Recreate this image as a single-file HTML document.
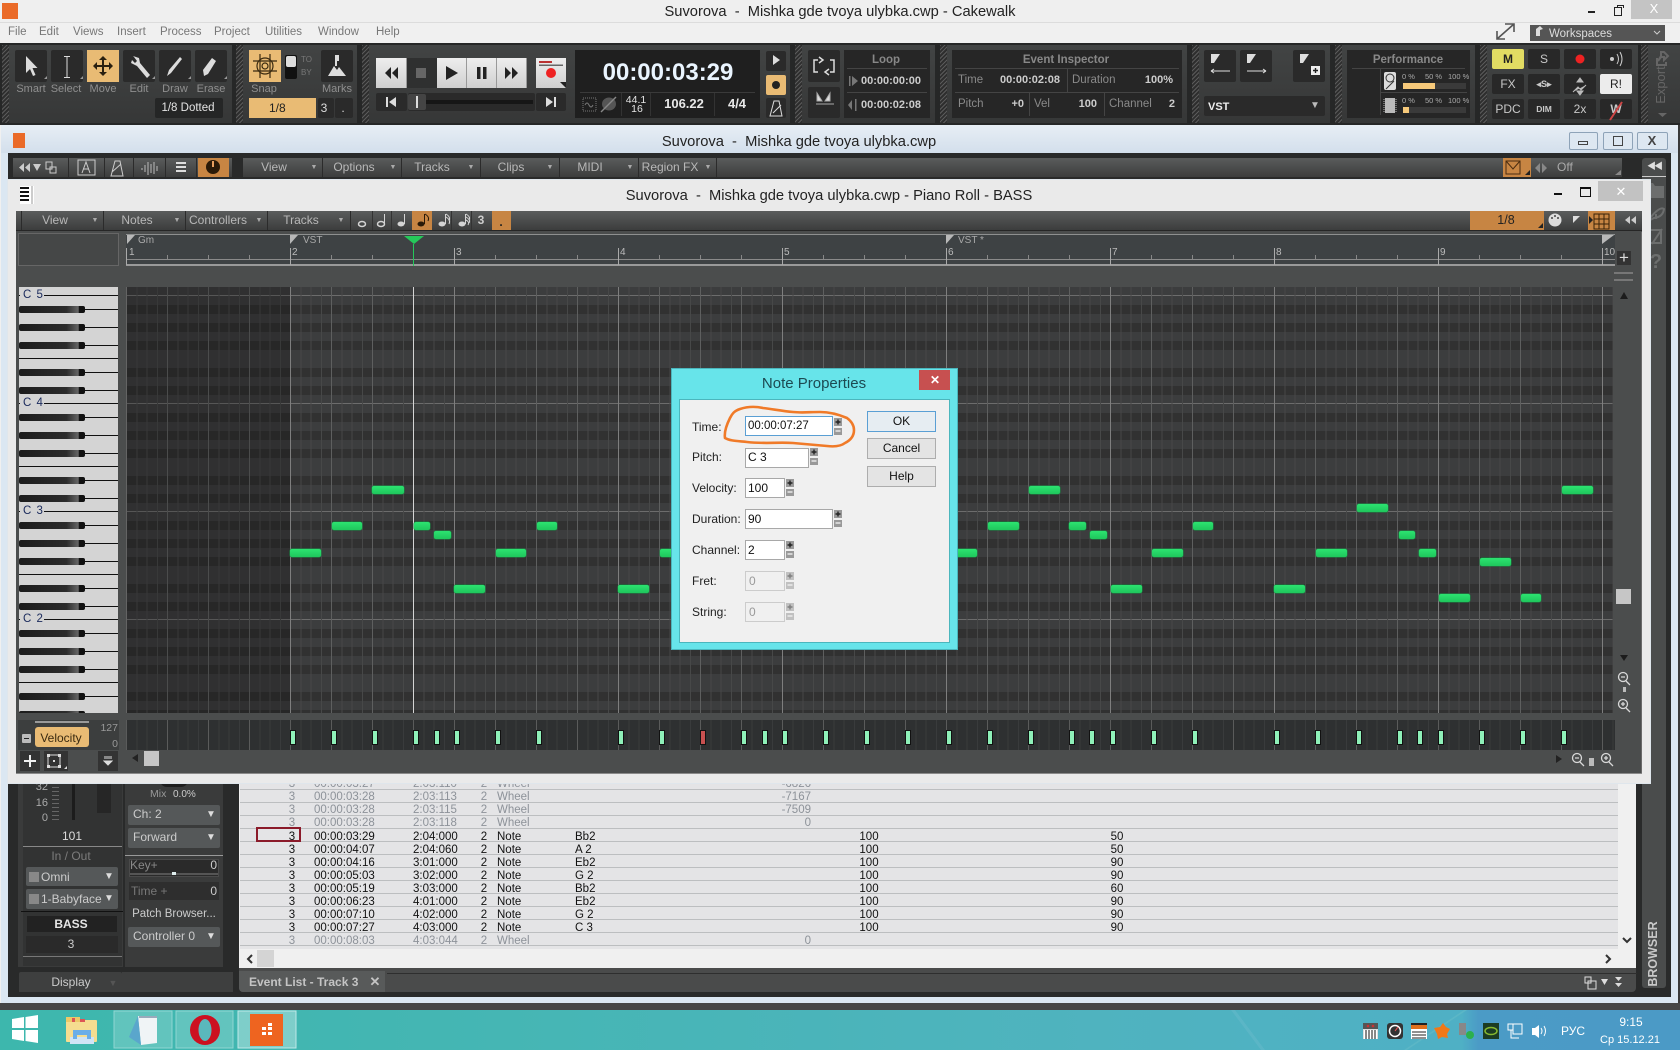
<!DOCTYPE html>
<html><head><meta charset="utf-8"><title>Suvorova - Mishka gde tvoya ulybka.cwp - Cakewalk</title>
<style>
html,body{margin:0;padding:0;background:#f0f0f0}
body{position:relative;width:1680px;height:1050px;overflow:hidden;font-family:"Liberation Sans","Noto Sans CJK SC",sans-serif;font-size:12px}
div,svg,span.t{position:absolute}
.t{position:absolute;line-height:0;white-space:nowrap;margin-top:1px}
.c{transform:translateX(-50%)}
.rt{transform:translateX(-100%)}
.p{background:linear-gradient(#424444,#363737);top:45px;height:78px}
.g{background:repeating-linear-gradient(135deg,#5a5a5a 0 1px,#2e2e2e 1px 3px);top:45px;height:78px;width:7px}
.b{background:#2a2a2a;border-radius:2px}
.bl{color:#8f8f8f;font-size:11px;top:88px}
.lt{background:linear-gradient(#eee,#cfcfcf);border-right:1px solid #999}
.ms{background:#282828;border-radius:2px;color:#c8c8c8;text-align:center;line-height:20px;width:32px;height:20px;font-size:12px}
.tb{background:linear-gradient(#5a5c5c,#3c3d3d)}
.sp{background:#2b2b2b;width:1px}
.n{background:linear-gradient(#2ce370,#1fc65c);height:8px;border-radius:2px;box-shadow:0 0 0 .5px #168b43}
.v{background:#8ef0b8;border:1px solid #111;width:4px;height:13px;top:730px;box-sizing:content-box}
.r{left:0;height:0;width:1380px;color:#111;font-size:11.5px}
.r.f{color:#8d9299}
.r i{position:absolute;font-style:normal;line-height:0;white-space:nowrap;margin-top:1px}
.a{left:292px;transform:translateX(-50%)}.d{left:314px}.e{left:413px}.h{left:484px;transform:translateX(-50%)}.k{left:497px}.m{left:575px}.y{left:811px;transform:translateX(-100%)}.o{left:869px;transform:translateX(-50%)}.u{left:1117px;transform:translateX(-50%)}
.ln{left:240px;width:1378px;height:1px;background:#bcbec0}
.dd{background:#555859;border-radius:2px;color:#c9c9c9;font-size:12px}
.in{background:#fff;border:1px solid #a8a8a8;box-sizing:border-box;height:20px;left:745px}
.in.x{background:#f0f0f0;border-color:#ccc}
.btn{left:867px;width:69px;height:21px;box-sizing:border-box;border:1px solid #adadad;background:#e4e4e4;text-align:center;line-height:19px;font-size:12px;color:#111}
.lab{color:#222;font-size:12px;left:692px}
.men{color:#777;font-size:11.5px;top:31px}
.ck{left:20px;width:24px;height:12px;background:#d4d4d4;color:#1a2a5c;font-size:11.5px;letter-spacing:1px;line-height:12px;text-indent:3px;white-space:nowrap}
</style></head><body>

<!-- main title -->
<div style="left:0;top:0;width:1680px;height:22px;background:#efefef;border-bottom:1px solid #dcdcdc"></div>
<div style="left:2px;top:3px;width:16px;height:16px;background:#ea6a28"></div>
<span class="t c" style="left:840px;top:11px;font-size:14.7px;color:#222">Suvorova &nbsp;-&nbsp; Mishka gde tvoya ulybka.cwp - Cakewalk</span>
<div style="left:1588px;top:11px;width:7px;height:2px;background:#222"></div>
<div style="left:1614px;top:7px;width:6px;height:7px;border:1px solid #222"></div>
<div style="left:1617px;top:5px;width:5px;height:2px;border:1px solid #222;border-bottom:0"></div>
<div style="left:1631px;top:0;width:41px;height:19px;background:#c4c4c4"></div>
<span class="t c" style="left:1654px;top:8px;font-size:13px;color:#fff">X</span>

<!-- menu -->
<div style="left:0;top:23px;width:1680px;height:20px;background:#f0f0f0"></div>
<span class="t men" style="left:8px">File</span>
<span class="t men" style="left:39px">Edit</span>
<span class="t men" style="left:73px">Views</span>
<span class="t men" style="left:117px">Insert</span>
<span class="t men" style="left:160px">Process</span>
<span class="t men" style="left:214px">Project</span>
<span class="t men" style="left:265px">Utilities</span>
<span class="t men" style="left:318px">Window</span>
<span class="t men" style="left:376px">Help</span>
<div style="left:1530px;top:25px;width:135px;height:16px;background:#555"></div>
<span class="t" style="left:1549px;top:33px;color:#ddd;font-size:11.5px">Workspaces</span>
<svg style="left:0;top:0" width="1680" height="130">
<path d="M1497 39l17-15M1505 24h9v8M1497 31v8h8" stroke="#555" stroke-width="1.6" fill="none"/>
<path d="M1536 36l0-7 4-3 3 3-3 1v6z" fill="#ddd"/><path d="M1654 31l3 3 3-3" stroke="#ccc" fill="none"/>
</svg>

<!-- top toolbar -->
<div style="left:0;top:43px;width:1680px;height:82px;background:#262727"></div>
<div class="g" style="left:2px"></div><div class="p" style="left:9px;width:223px"></div>
<div class="g" style="left:236px"></div><div class="p" style="left:243px;width:114px"></div>
<div class="g" style="left:362px"></div><div class="p" style="left:369px;width:421px"></div>
<div class="g" style="left:795px"></div><div class="p" style="left:802px;width:133px"></div>
<div class="g" style="left:940px"></div><div class="p" style="left:947px;width:240px"></div>
<div class="g" style="left:1192px"></div><div class="p" style="left:1199px;width:131px"></div>
<div class="g" style="left:1335px"></div><div class="p" style="left:1342px;width:133px"></div>
<div class="g" style="left:1480px"></div><div class="p" style="left:1487px;width:151px"></div>
<div class="g" style="left:1641px"></div><div class="p" style="left:1648px;width:32px"></div>

<div class="b" style="left:15px;top:50px;width:32px;height:32px"></div>
<div class="b" style="left:51px;top:50px;width:32px;height:32px"></div>
<div style="left:87px;top:50px;width:32px;height:32px;background:#e9bb74"></div>
<div class="b" style="left:123px;top:50px;width:32px;height:32px"></div>
<div class="b" style="left:159px;top:50px;width:32px;height:32px"></div>
<div class="b" style="left:195px;top:50px;width:32px;height:32px"></div>
<span class="t c bl" style="left:31px">Smart</span>
<span class="t c bl" style="left:66px">Select</span>
<span class="t c bl" style="left:103px">Move</span>
<span class="t c bl" style="left:139px">Edit</span>
<span class="t c bl" style="left:175px">Draw</span>
<span class="t c bl" style="left:211px">Erase</span>
<div class="b" style="left:155px;top:98px;width:68px;height:20px;background:#252626"></div>
<span class="t c" style="left:188px;top:107px;color:#e4e4e4;font-size:11.5px">1/8 Dotted</span>

<div style="left:249px;top:50px;width:32px;height:32px;background:#e9bb74"></div>
<div class="b" style="left:285px;top:55px;width:12px;height:24px;background:#111"></div>
<div style="left:286px;top:56px;width:10px;height:11px;background:#ddd;border-radius:2px"></div>
<span class="t" style="left:301px;top:59px;color:#777;font-size:8px">TO</span>
<span class="t" style="left:301px;top:72px;color:#777;font-size:8px">BY</span>
<div class="b" style="left:321px;top:50px;width:32px;height:32px"></div>
<span class="t c bl" style="left:264px">Snap</span>
<span class="t c bl" style="left:337px">Marks</span>
<div style="left:249px;top:98px;width:67px;height:20px;background:#e9bb74"></div>
<span class="t" style="left:269px;top:107px;color:#222;font-size:12px">1/8</span>
<div class="b" style="left:318px;top:98px;width:16px;height:20px"></div>
<span class="t c" style="left:324px;top:107px;color:#ddd">3</span>
<div class="b" style="left:335px;top:98px;width:18px;height:20px"></div>
<span class="t c" style="left:343px;top:107px;color:#ddd">.</span>

<!-- transport -->
<div class="lt" style="left:376px;top:58px;width:30px;height:30px"></div>
<div style="left:407px;top:58px;width:30px;height:30px;background:#2f3030"></div>
<div class="lt" style="left:437px;top:58px;width:29px;height:30px"></div>
<div class="lt" style="left:467px;top:58px;width:29px;height:30px"></div>
<div class="lt" style="left:497px;top:58px;width:29px;height:30px"></div>
<div class="lt" style="left:536px;top:58px;width:30px;height:30px;border:0"></div>
<div class="b" style="left:376px;top:93px;width:31px;height:18px"></div>
<div class="b" style="left:408px;top:93px;width:127px;height:18px"></div>
<div style="left:425px;top:100px;width:108px;height:4px;background:#161616"></div>
<div style="left:408px;top:94px;width:18px;height:16px;background:#444;border-radius:2px"></div>
<div style="left:416px;top:96px;width:2px;height:12px;background:#ddd"></div>
<div class="b" style="left:536px;top:93px;width:30px;height:18px"></div>
<div style="left:575px;top:50px;width:185px;height:68px;background:#1f1f1f"></div>
<div style="left:580px;top:92px;width:175px;height:1px;background:#3a3a3a"></div>
<span class="t c" style="left:668px;top:72px;font-size:24px;font-weight:bold;color:#eaf5ff">00:00:03:29</span>
<span class="t c" style="left:636px;top:99px;font-size:10.5px;color:#e4e4e4">44.1</span>
<span class="t c" style="left:637px;top:108px;font-size:10.5px;color:#e4e4e4">16</span>
<span class="t c" style="left:684px;top:103px;font-size:13px;font-weight:bold;color:#e8e8e8">106.22</span>
<span class="t c" style="left:737px;top:103px;font-size:13px;font-weight:bold;color:#e8e8e8">4/4</span>
<div style="left:621px;top:93px;width:1px;height:23px;background:#333"></div>
<div style="left:650px;top:93px;width:1px;height:23px;background:#333"></div>
<div style="left:714px;top:93px;width:1px;height:23px;background:#333"></div>
<div class="b" style="left:766px;top:51px;width:20px;height:20px"></div>
<div style="left:766px;top:75px;width:20px;height:20px;background:#e9bb74;border-radius:2px"></div>
<div class="b" style="left:766px;top:98px;width:20px;height:20px"></div>

<!-- loop -->
<div class="b" style="left:808px;top:50px;width:32px;height:32px"></div>
<div class="b" style="left:808px;top:87px;width:32px;height:31px"></div>
<div style="left:844px;top:50px;width:86px;height:68px;background:#262626"></div>
<span class="t c" style="left:886px;top:59px;color:#888;font-weight:bold;font-size:11.5px">Loop</span>
<div style="left:847px;top:68px;width:80px;height:1px;background:#444"></div>
<div style="left:847px;top:92px;width:80px;height:1px;background:#444"></div>
<span class="t" style="left:861px;top:80px;color:#ccc;font-size:11px;font-weight:bold">00:00:00:00</span>
<span class="t" style="left:861px;top:104px;color:#ccc;font-size:11px;font-weight:bold">00:00:02:08</span>

<!-- event inspector -->
<div style="left:952px;top:50px;width:230px;height:68px;background:#262626"></div>
<span class="t c" style="left:1066px;top:59px;color:#888;font-weight:bold;font-size:11.5px">Event Inspector</span>
<div style="left:955px;top:68px;width:224px;height:1px;background:#444"></div>
<div style="left:955px;top:92px;width:224px;height:1px;background:#444"></div>
<div style="left:1067px;top:69px;width:1px;height:23px;background:#444"></div>
<div style="left:1029px;top:93px;width:1px;height:23px;background:#444"></div>
<div style="left:1104px;top:93px;width:1px;height:23px;background:#444"></div>
<span class="t" style="left:958px;top:79px;color:#8a8a8a;font-size:11.5px">Time</span>
<span class="t" style="left:1000px;top:79px;color:#ccc;font-size:11px;font-weight:bold">00:00:02:08</span>
<span class="t" style="left:1072px;top:79px;color:#8a8a8a;font-size:11.5px">Duration</span>
<span class="t rt" style="left:1173px;top:79px;color:#ccc;font-size:11px;font-weight:bold">100%</span>
<span class="t" style="left:958px;top:103px;color:#8a8a8a;font-size:11.5px">Pitch</span>
<span class="t rt" style="left:1024px;top:103px;color:#ccc;font-size:11px;font-weight:bold">+0</span>
<span class="t" style="left:1034px;top:103px;color:#8a8a8a;font-size:11.5px">Vel</span>
<span class="t rt" style="left:1097px;top:103px;color:#ccc;font-size:11px;font-weight:bold">100</span>
<span class="t" style="left:1109px;top:103px;color:#8a8a8a;font-size:11.5px">Channel</span>
<span class="t rt" style="left:1175px;top:103px;color:#ccc;font-size:11px;font-weight:bold">2</span>

<div class="b" style="left:1204px;top:50px;width:32px;height:32px"></div>
<div class="b" style="left:1240px;top:50px;width:32px;height:32px"></div>
<div class="b" style="left:1293px;top:50px;width:32px;height:32px"></div>
<div class="b" style="left:1204px;top:96px;width:121px;height:20px"></div>
<span class="t" style="left:1208px;top:106px;color:#eee;font-weight:bold;font-size:11px">VST</span>
<span class="t c" style="left:1315px;top:105px;color:#bbb;font-size:10px">▼</span>

<!-- performance -->
<div style="left:1347px;top:50px;width:123px;height:68px;background:#262626"></div>
<span class="t c" style="left:1408px;top:59px;color:#888;font-weight:bold;font-size:11.5px">Performance</span>
<div style="left:1352px;top:68px;width:113px;height:1px;background:#444"></div>
<div style="left:1380px;top:92px;width:87px;height:1px;background:#444"></div>
<div style="left:1380px;top:69px;width:1px;height:46px;background:#444"></div>
<div style="left:1403px;top:83px;width:63px;height:6px;background:#3a3a3a"></div>
<div style="left:1403px;top:83px;width:32px;height:6px;background:#f6c97a"></div>
<div style="left:1403px;top:107px;width:63px;height:6px;background:#3a3a3a"></div>
<div style="left:1403px;top:107px;width:6px;height:6px;background:#f6c97a"></div>
<span class="t" style="left:1402px;top:76px;color:#aaa;font-size:7.5px">0 %</span>
<span class="t" style="left:1425px;top:76px;color:#aaa;font-size:7.5px">50 %</span>
<span class="t" style="left:1448px;top:76px;color:#aaa;font-size:7.5px">100 %</span>
<span class="t" style="left:1402px;top:100px;color:#aaa;font-size:7.5px">0 %</span>
<span class="t" style="left:1425px;top:100px;color:#aaa;font-size:7.5px">50 %</span>
<span class="t" style="left:1448px;top:100px;color:#aaa;font-size:7.5px">100 %</span>

<!-- M S R -->
<div class="ms" style="left:1492px;top:49px;background:#e2dc63;color:#222;font-weight:bold">M</div>
<div class="ms" style="left:1528px;top:49px">S</div>
<div class="ms" style="left:1564px;top:49px"></div>
<div class="ms" style="left:1600px;top:49px"></div>
<div class="ms" style="left:1492px;top:74px">FX</div>
<div class="ms" style="left:1528px;top:74px;font-size:9px;font-weight:bold">&#9666;S&#9656;</div>
<div class="ms" style="left:1564px;top:74px"></div>
<div class="ms" style="left:1600px;top:74px;background:#ececec;color:#222">R!</div>
<div class="ms" style="left:1492px;top:99px">PDC</div>
<div class="ms" style="left:1528px;top:99px;font-size:8.5px;font-weight:bold">DIM</div>
<div class="ms" style="left:1564px;top:99px">2x</div>
<div class="ms" style="left:1600px;top:99px;font-weight:bold">W</div>
<span class="t" style="left:1661px;top:85px;margin:0;color:#666;font-size:13px;transform:translateX(-50%) rotate(-90deg)">Export</span>

<svg style="left:0;top:40px" width="1680" height="90" viewBox="0 40 1680 90">
<g fill="#dcdcdc">
<path d="M26 56v17l4-4 3 7 2.500-1-3-7h5z"/>
<path d="M64 56h6v1h-2.500v20h2.500v1h-6v-1h2.500v-20h-2.500z"/>
<path d="M44 79h3v-3zM80 79h3v-3zM152 79h3v-3zM188 79h3v-3zM224 79h3v-3z" fill="#999"/>
<path d="M133 56l6 2 1 5 10 12-3 3-10-12-6-3 1-3 3 3 2-2-3-4z"/>
<path d="M167 76l2-6 11-13 2 2-11 14z"/>
<path d="M204 76l-1-6 9-12 4 3-8 13z"/>
</g>
<path fill="#2a2010" d="M103 56l4 4h-3v5h5v-3l4 4-4 4v-3h-5v5h3l-4 4-4-4h3v-5h-5v3l-4-4 4-4v3h5v-5h-3z"/>
<g fill="none" stroke="#3a2a10" stroke-width="1.200"><circle cx="265" cy="66" r="8"/><path d="M253 61h24M253 71h24M260 54v24M270 54v24"/><circle cx="265" cy="66" r="3"/></g>
<path d="M328 76l6-10 3 4 2-3 7 9h-8z" fill="#ddd"/><path d="M335 55h4v6h-2v5h-2z" fill="#ddd"/>
<g fill="#222"><path d="M385 73l6-6v12zM392 73l6-6v12z"/><path d="M446 66v14l12-7z"/><path d="M477 67h3.500v12h-3.500zM483 67h3.500v12h-3.500z"/><path d="M505 67l6 6-6 6zM512 67l6 6-6 6z"/></g>
<rect x="416" y="68" width="10" height="10" fill="#666"/>
<rect x="539" y="61" width="13" height="2" fill="#b33"/><rect x="539" y="64.500" width="24" height="1.500" fill="#666"/><circle cx="551" cy="73" r="5" fill="#e22"/><path d="M566 88v-6h-6z" fill="#222"/>
<g fill="#ddd"><path d="M386 97v10h2v-10zM396 97v10l-7-5z"/><path d="M546 97v10l7-5zM554 97h2v10h-2z"/><path d="M773 55v10l7-5z"/></g>
<rect x="583" y="98" width="13" height="13" fill="none" stroke="#777" stroke-dasharray="1 1"/><path d="M585 105q2-4 4 0t4 0" stroke="#777" fill="none"/>
<ellipse cx="609" cy="104" rx="7" ry="6.500" fill="#555"/><path d="M601 112l15-15" stroke="#888" stroke-width="1.400"/>
<circle cx="776" cy="85" r="4" fill="#222"/>
<path d="M770 116l4-15h5l3 15zM773 113l8-8" stroke="#ddd" fill="none"/>
<g fill="none" stroke="#ddd" stroke-width="1.500"><path d="M818 60h-4v12h4M830 60h4v12h-4"/><path d="M819 57l4 3-4 3M829 69l-4 3 4 3"/></g>
<path d="M817 93l5 8h-5zM830 93l-5 8h5zM816 104h18" fill="#ddd" stroke="#aaa"/>
<path d="M849 76v10h1.500v-10zM852 76l6 5-6 5zM852 100l-4 5 4 5zM855 99v12h1.500v-12z" fill="#777"/>
<g fill="#ddd"><path d="M1211 54h9l-6 9h-3zM1247 54h9l-6 9h-3zM1300 54h9l-6 9h-3z"/><rect x="1311" y="66" width="9" height="9" fill="#eee"/></g>
<path d="M1211 71h19M1247 71h19M1211 71l3-2M1211 71l3 2M1266 71l-3-2M1266 71l-3 2" stroke="#ddd"/>
<path d="M1313 70.500h5M1315.500 68v5" stroke="#222" stroke-width="1.400"/>
<rect x="1384" y="72" width="12" height="18" rx="2" fill="#ddd"/><circle cx="1390" cy="78" r="4" fill="none" stroke="#333"/><path d="M1386 89l8-8" stroke="#333"/>
<rect x="1385" y="98" width="10" height="15" fill="#bbb"/><path d="M1384 99v14M1396 99v14" stroke="#bbb" stroke-dasharray="1 1"/>
<circle cx="1580" cy="59" r="4.500" fill="#e22"/>
<circle cx="1612" cy="59" r="2" fill="#ccc"/><path d="M1617 54q3 5 0 10M1620 52q4 7 0 14" stroke="#ccc" fill="none"/>
<path d="M1573 92l5-5 3 3 5-5M1580 78l3 4h-6zM1580 95l3-4h-6z" stroke="#bbb" fill="#bbb"/>
<path d="M1610 120l12-18" stroke="#c44" stroke-width="2"/>
<path d="M1661 56v-4h3l4 4-4 4v-3h-3l-3 4zM1657 58v7h9v-3" fill="none" stroke="#666" stroke-width="2"/>
<path d="M1658 113h9l-4.500 4z" fill="#666"/>
</svg>

<!-- MDI window -->
<div style="left:1px;top:125px;width:1677px;height:878px;background:#dbe7f2"></div>
<div style="left:1px;top:125px;width:1677px;height:28px;background:linear-gradient(#e7eef5,#d3dfec)"></div>
<div style="left:13px;top:133px;width:12px;height:15px;background:#ea6a28"></div>
<span class="t c" style="left:799px;top:141px;font-size:14.7px;color:#222">Suvorova &nbsp;-&nbsp; Mishka gde tvoya ulybka.cwp</span>
<div style="left:1569px;top:132px;width:29px;height:18px;border:1px solid #8ea3b8;border-radius:2px;background:#dde7f1;box-sizing:border-box"></div>
<div style="left:1603px;top:132px;width:30px;height:18px;border:1px solid #8ea3b8;border-radius:2px;background:#dde7f1;box-sizing:border-box"></div>
<div style="left:1637px;top:132px;width:31px;height:18px;border:1px solid #8ea3b8;border-radius:2px;background:#dde7f1;box-sizing:border-box"></div>
<div style="left:1578px;top:141px;width:10px;height:4px;border:1px solid #444;box-sizing:border-box"></div>
<div style="left:1613px;top:136px;width:10px;height:10px;border:1px solid #444;box-sizing:border-box"></div>
<span class="t c" style="left:1652px;top:140px;font-weight:bold;font-size:13px;color:#444">X</span>

<div style="left:8px;top:153px;width:1663px;height:844px;background:#292a2a"></div>
<!-- mdi toolbar -->
<div class="tb" style="left:13px;top:158px;width:219px;height:19px"></div>
<div class="tb" style="left:243px;top:158px;width:1379px;height:19px"></div>
<div style="left:198px;top:158px;width:31px;height:19px;background:#c78543"></div>
<div class="sp" style="left:68px;top:158px;height:19px"></div><div class="sp" style="left:104px;top:158px;height:19px"></div><div class="sp" style="left:133px;top:158px;height:19px"></div><div class="sp" style="left:165px;top:158px;height:19px"></div><div class="sp" style="left:196px;top:158px;height:19px"></div>
<svg style="left:0;top:150px" width="1680" height="40" viewBox="0 150 1680 40">
<g fill="#ccc"><path d="M24 163v9l-5-4.500zM30 163v9l-5-4.500zM33 164h8l-4 7z"/></g>
<path d="M46 162h6v7h-6zM50 167h6v6h-6z" stroke="#ccc" fill="none"/>
<rect x="78" y="160" width="17" height="15" fill="none" stroke="#ccc"/><path d="M82 173l4-11 4 11M83 169h6" stroke="#ccc" fill="none"/>
<path d="M111 176l4-15h5l3 15zM112 172l9-8" stroke="#ccc" fill="none"/>
<path d="M142 168v2M145 165v7M148 162v13M151 164v9M154 162v12M157 166v5" stroke="#bbb"/>
<path d="M176 163h10M176 167h10M176 171h10" stroke="#ddd" stroke-width="2"/>
<circle cx="213" cy="167" r="7" fill="#2a1a08"/><rect x="212" y="161" width="2" height="6" fill="#e8a060"/>
</svg>
<span class="t c" style="left:274px;top:166px;color:#b8b8b8">View</span>
<span class="t c" style="left:354px;top:166px;color:#b8b8b8">Options</span>
<span class="t c" style="left:432px;top:166px;color:#b8b8b8">Tracks</span>
<span class="t c" style="left:511px;top:166px;color:#b8b8b8">Clips</span>
<span class="t c" style="left:590px;top:166px;color:#b8b8b8">MIDI</span>
<span class="t c" style="left:670px;top:166px;color:#b8b8b8">Region FX</span>
<div class="sp" style="left:322px;top:158px;height:19px"></div><div class="sp" style="left:401px;top:158px;height:19px"></div><div class="sp" style="left:480px;top:158px;height:19px"></div><div class="sp" style="left:559px;top:158px;height:19px"></div><div class="sp" style="left:638px;top:158px;height:19px"></div><div class="sp" style="left:716px;top:158px;height:19px"></div>
<span class="t c" style="left:314px;top:167px;color:#aaa;font-size:7px">▼</span><span class="t c" style="left:393px;top:167px;color:#aaa;font-size:7px">▼</span><span class="t c" style="left:471px;top:167px;color:#aaa;font-size:7px">▼</span><span class="t c" style="left:550px;top:167px;color:#aaa;font-size:7px">▼</span><span class="t c" style="left:630px;top:167px;color:#aaa;font-size:7px">▼</span><span class="t c" style="left:708px;top:167px;color:#aaa;font-size:7px">▼</span>
<div style="left:1503px;top:158px;width:28px;height:19px;background:#c78543"></div>
<svg style="left:1503px;top:158px" width="28" height="19"><path d="M3 3h14v13h-14zM3 3l7 8 7-8" stroke="#4a2c10" fill="none"/><path d="M22 17h5v-5z" fill="#222"/></svg>
<span class="t" style="left:1557px;top:166px;color:#aaa;font-size:12px">Off</span>
<svg style="left:1534px;top:160px" width="88" height="16"><path d="M6 3v10l-5-5zM8 3v10l5-5z" fill="#888"/><path d="M81 15h6v-5z" fill="#888"/></svg>
<div style="left:1642px;top:158px;width:24px;height:830px;background:#4a4c4c;border-radius:3px"></div>
<span class="t c" style="left:1654px;top:165px;color:#ddd;font-size:9px;letter-spacing:-2px">◀◀</span>
<div style="left:1642px;top:176px;width:24px;height:1px;background:#ccc"></div>
<svg style="left:1644px;top:180px" width="22" height="70"><path d="M2 3h7l2 3h9v12h-18z" fill="#6c6e6e"/><path d="M6 38q10-12 14-9-1 8-10 9l-4 2zM12 34v5" stroke="#6c6e6e" fill="none" stroke-width="2"/><path d="M5 50h12v13h-12zM8 64l10-15" stroke="#6c6e6e" fill="none" stroke-width="2"/></svg>
<span class="t c" style="left:1656px;top:261px;color:#6c6e6e;font-size:20px;font-weight:bold">?</span>
<span class="t" style="left:1653px;top:954px;margin:0;color:#c8c8c8;font-size:12.5px;font-weight:bold;transform:translate(-50%,0) rotate(-90deg)">BROWSER</span>

<!-- inspector -->
<div style="left:18px;top:783px;width:105px;height:184px;background:#3a3b3b"></div>
<div style="left:125px;top:783px;width:98px;height:184px;background:#3a3b3b"></div>
<div style="left:23px;top:783px;width:99px;height:183px;background:#323333"></div>
<span class="t rt" style="left:48px;top:786px;color:#aaa;font-size:11px">32</span>
<span class="t rt" style="left:48px;top:802px;color:#aaa;font-size:11px">16</span>
<span class="t rt" style="left:48px;top:817px;color:#aaa;font-size:11px">0</span>
<div style="left:52px;top:783px;width:7px;height:37px;background:repeating-linear-gradient(#666 0 1px,transparent 1px 4px)"></div>
<div style="left:72px;top:783px;width:3px;height:37px;background:#1c1c1c"></div>
<div style="left:97px;top:783px;width:14px;height:30px;background:#262626"></div>
<div style="left:160px;top:780px;width:28px;height:7px;border-radius:0 0 14px 14px;background:#1e1e1e"></div>
<span class="t c" style="left:72px;top:835px;color:#ddd;font-size:12px">101</span>
<div style="left:23px;top:846px;width:99px;height:1px;background:#888"></div>
<span class="t c" style="left:71px;top:855px;color:#7c7c7c;font-size:12px">In / Out</span>
<div class="dd" style="left:26px;top:867px;width:92px;height:19px"></div>
<div class="dd" style="left:26px;top:889px;width:92px;height:20px"></div>
<div style="left:29px;top:872px;width:10px;height:10px;background:#888"></div>
<div style="left:29px;top:894px;width:10px;height:10px;background:#888"></div>
<span class="t" style="left:41px;top:876px;color:#ccc;font-size:12px">Omni</span>
<span class="t" style="left:41px;top:898px;color:#ccc;font-size:12px">1-Babyface</span>
<span class="t c" style="left:109px;top:876px;color:#ddd;font-size:10px">▼</span>
<span class="t c" style="left:109px;top:898px;color:#ddd;font-size:10px">▼</span>
<div style="left:21px;top:911px;width:102px;height:1px;background:#111"></div>
<div style="left:27px;top:916px;width:90px;height:16px;background:#222"></div>
<span class="t c" style="left:71px;top:923px;color:#e6e6e6;font-weight:bold;font-size:12px">BASS</span>
<div style="left:26px;top:936px;width:92px;height:17px;background:#2a2a2a"></div>
<span class="t c" style="left:71px;top:943px;color:#ccc;font-size:12px">3</span>
<div style="left:23px;top:956px;width:99px;height:1px;background:#777"></div>
<span class="t" style="left:150px;top:793px;color:#999;font-size:10.5px">Mix</span>
<span class="t" style="left:173px;top:794px;color:#ccc;font-size:10px">0.0%</span>
<div class="dd" style="left:128px;top:805px;width:92px;height:20px"></div>
<div class="dd" style="left:128px;top:828px;width:92px;height:20px"></div>
<span class="t" style="left:133px;top:813px;color:#ccc">Ch: 2</span>
<span class="t" style="left:133px;top:836px;color:#ccc">Forward</span>
<span class="t c" style="left:211px;top:814px;color:#ddd;font-size:10px">▼</span>
<span class="t c" style="left:211px;top:837px;color:#ddd;font-size:10px">▼</span>
<div style="left:125px;top:855px;width:98px;height:1px;background:#999"></div>
<div style="left:129px;top:859px;width:90px;height:18px;background:#2a2a2a;border:1px solid #4a4a4a;box-sizing:border-box"></div>
<div style="left:130px;top:873px;width:88px;height:2px;background:#555"></div>
<div style="left:172px;top:872px;width:4px;height:3px;background:#dfeeee"></div>
<span class="t" style="left:130px;top:864px;color:#888">Key+</span>
<span class="t rt" style="left:217px;top:864px;color:#ccc">0</span>
<div style="left:129px;top:882px;width:90px;height:18px;background:#2e2e2e"></div>
<span class="t" style="left:131px;top:890px;color:#777">Time +</span>
<span class="t rt" style="left:217px;top:890px;color:#ccc">0</span>
<span class="t c" style="left:174px;top:913px;color:#ccc;font-size:11.5px">Patch Browser...</span>
<div class="dd" style="left:128px;top:927px;width:92px;height:20px"></div>
<span class="t" style="left:133px;top:935px;color:#ccc">Controller 0</span>
<span class="t c" style="left:211px;top:936px;color:#ddd;font-size:10px">▼</span>
<div style="left:19px;top:972px;width:103px;height:20px;background:#3e3f3f;border-radius:2px 2px 0 0"></div>
<span class="t c" style="left:71px;top:981px;color:#ccc;font-size:12px">Display</span>
<span class="t c" style="left:113px;top:982px;color:#555;font-size:9px">▼</span>
<div style="left:122px;top:972px;width:111px;height:20px;background:#3e3f3f"></div>

<!-- event list -->
<div style="left:239px;top:783px;width:1397px;height:185px;background:#f0f0f0"></div>
<div style="left:240px;top:783px;width:1378px;height:166px;background:#e4e4e6"></div>
<div class="ln" style="top:789px"></div><div class="ln" style="top:802px"></div><div class="ln" style="top:815px"></div><div class="ln" style="top:828px"></div><div class="ln" style="top:841px"></div><div class="ln" style="top:854px"></div><div class="ln" style="top:867px"></div><div class="ln" style="top:880px"></div><div class="ln" style="top:893px"></div><div class="ln" style="top:906px"></div><div class="ln" style="top:919px"></div><div class="ln" style="top:932px"></div><div class="ln" style="top:945px"></div>
<div class="r f" style="top:783px"><i class="a">3</i><i class="d">00:00:03:27</i><i class="e">2:03:110</i><i class="h">2</i><i class="k">Wheel</i><i class="y">-6826</i></div>
<div class="r f" style="top:796px"><i class="a">3</i><i class="d">00:00:03:28</i><i class="e">2:03:113</i><i class="h">2</i><i class="k">Wheel</i><i class="y">-7167</i></div>
<div class="r f" style="top:809px"><i class="a">3</i><i class="d">00:00:03:28</i><i class="e">2:03:115</i><i class="h">2</i><i class="k">Wheel</i><i class="y">-7509</i></div>
<div class="r f" style="top:822px"><i class="a">3</i><i class="d">00:00:03:28</i><i class="e">2:03:118</i><i class="h">2</i><i class="k">Wheel</i><i class="y">0</i></div>
<div class="r" style="top:836px"><i class="a">3</i><i class="d">00:00:03:29</i><i class="e">2:04:000</i><i class="h">2</i><i class="k">Note</i><i class="m">Bb2</i><i class="o">100</i><i class="u">50</i></div>
<div class="r" style="top:849px"><i class="a">3</i><i class="d">00:00:04:07</i><i class="e">2:04:060</i><i class="h">2</i><i class="k">Note</i><i class="m">A 2</i><i class="o">100</i><i class="u">50</i></div>
<div class="r" style="top:862px"><i class="a">3</i><i class="d">00:00:04:16</i><i class="e">3:01:000</i><i class="h">2</i><i class="k">Note</i><i class="m">Eb2</i><i class="o">100</i><i class="u">90</i></div>
<div class="r" style="top:875px"><i class="a">3</i><i class="d">00:00:05:03</i><i class="e">3:02:000</i><i class="h">2</i><i class="k">Note</i><i class="m">G 2</i><i class="o">100</i><i class="u">90</i></div>
<div class="r" style="top:888px"><i class="a">3</i><i class="d">00:00:05:19</i><i class="e">3:03:000</i><i class="h">2</i><i class="k">Note</i><i class="m">Bb2</i><i class="o">100</i><i class="u">60</i></div>
<div class="r" style="top:901px"><i class="a">3</i><i class="d">00:00:06:23</i><i class="e">4:01:000</i><i class="h">2</i><i class="k">Note</i><i class="m">Eb2</i><i class="o">100</i><i class="u">90</i></div>
<div class="r" style="top:914px"><i class="a">3</i><i class="d">00:00:07:10</i><i class="e">4:02:000</i><i class="h">2</i><i class="k">Note</i><i class="m">G 2</i><i class="o">100</i><i class="u">90</i></div>
<div class="r" style="top:927px"><i class="a">3</i><i class="d">00:00:07:27</i><i class="e">4:03:000</i><i class="h">2</i><i class="k">Note</i><i class="m">C 3</i><i class="o">100</i><i class="u">90</i></div>
<div class="r f" style="top:940px"><i class="a">3</i><i class="d">00:00:08:03</i><i class="e">4:03:044</i><i class="h">2</i><i class="k">Wheel</i><i class="y">0</i></div>
<div style="left:256px;top:827px;width:45px;height:15px;border:1px solid #8b1a2a;box-shadow:inset 0 0 0 1px #8b1a2a;box-sizing:border-box"></div>
<div style="left:257px;top:950px;width:17px;height:17px;background:#d4d4d4"></div>
<svg style="left:240px;top:950px" width="1396" height="18"><path d="M12 5l-4 4 4 4M1366 5l4 4-4 4" stroke="#333" stroke-width="2" fill="none"/></svg>
<svg style="left:1618px;top:932px" width="18" height="16"><path d="M5 6l4 4 4-4" stroke="#333" stroke-width="2" fill="none"/></svg>

<!-- bottom tab -->
<div style="left:239px;top:968px;width:1397px;height:24px;background:#4a4b4b;border-radius:0 0 4px 4px"></div>
<div style="left:239px;top:971px;width:146px;height:21px;background:#585a5a;border-radius:0 0 0 4px"></div>
<div style="left:387px;top:973px;width:1250px;height:1px;background:#2e2e2e"></div>
<span class="t" style="left:249px;top:981px;color:#c4c4c4;font-weight:bold;font-size:12px">Event List - Track 3</span>
<span class="t c" style="left:375px;top:981px;color:#c4c4c4;font-weight:bold;font-size:13px">✕</span>
<svg style="left:1580px;top:972px" width="50" height="20"><path d="M5 5h6v6h-6zM8 9h8v8h-8z" stroke="#ddd" fill="none"/><path d="M21 7h7l-3.500 6zM35 5h7l-3.500 4zM35 11h7l-3.500 4z" fill="#ddd"/></svg>

<!-- piano roll window -->
<div style="left:8px;top:180px;width:1642px;height:603px;background:#eaeaea;box-shadow:0 0 0 1px #dfe6ec"></div>
<span class="t c" style="left:829px;top:195px;font-size:14.7px;color:#222">Suvorova &nbsp;-&nbsp; Mishka gde tvoya ulybka.cwp - Piano Roll - BASS</span>
<svg style="left:20px;top:186px" width="14" height="18"><rect x="0" y="0" width="14" height="18" fill="#fff"/><path d="M0 1h9v2h-9zM0 5h9v2h-9zM0 9h9v2h-9zM0 13h9v2h-9z" fill="#111"/><path d="M12 0v18" stroke="#999"/></svg>
<div style="left:1554px;top:193px;width:8px;height:2px;background:#111"></div>
<div style="left:1580px;top:187px;width:9px;height:7px;border:1px solid #111;border-top-width:2px;box-sizing:content-box"></div>
<div style="left:1598px;top:181px;width:45px;height:20px;background:#c2c2c2"></div>
<span class="t c" style="left:1621px;top:191px;color:#fff;font-size:13px">✕</span>

<div style="left:16px;top:211px;width:1626px;height:562px;background:#4b4d4d"></div>
<div class="tb" style="left:16px;top:211px;width:1626px;height:19px"></div>
<div style="left:16px;top:230px;width:1626px;height:1px;background:#262626"></div>
<div class="sp" style="left:21px;top:211px;height:19px"></div>
<div class="sp" style="left:103px;top:211px;height:19px"></div>
<div class="sp" style="left:185px;top:211px;height:19px"></div>
<div class="sp" style="left:267px;top:211px;height:19px"></div>
<div class="sp" style="left:350px;top:211px;height:19px"></div>
<span class="t c" style="left:55px;top:219px;color:#b8b8b8">View</span>
<span class="t c" style="left:137px;top:219px;color:#b8b8b8">Notes</span>
<span class="t c" style="left:218px;top:219px;color:#b8b8b8">Controllers</span>
<span class="t c" style="left:301px;top:219px;color:#b8b8b8">Tracks</span>
<span class="t c" style="left:95px;top:220px;color:#aaa;font-size:7px">▼</span><span class="t c" style="left:177px;top:220px;color:#aaa;font-size:7px">▼</span><span class="t c" style="left:259px;top:220px;color:#aaa;font-size:7px">▼</span><span class="t c" style="left:341px;top:220px;color:#aaa;font-size:7px">▼</span>
<div style="left:412px;top:211px;width:20px;height:19px;background:#c78543"></div>
<div style="left:492px;top:211px;width:19px;height:19px;background:#c78543"></div>
<svg style="left:353px;top:211px" width="160" height="19">
<g fill="#d4d4d4"><ellipse cx="9" cy="13" rx="3.500" ry="2.500" fill="none" stroke="#d4d4d4" stroke-width="1.500"/>
<ellipse cx="28" cy="13" rx="3.500" ry="2.500" fill="none" stroke="#d4d4d4" stroke-width="1.500"/><rect x="31" y="3" width="1" height="10"/>
<ellipse cx="48" cy="13" rx="3.500" ry="2.500"/><rect x="51" y="3" width="1" height="10"/>
<ellipse cx="68" cy="13" rx="3.500" ry="2.500" fill="#2a1a08"/><rect x="71" y="3" width="1" height="10" fill="#2a1a08"/><path d="M72 3q5 3 3 7" stroke="#2a1a08" fill="none"/>
<ellipse cx="89" cy="13" rx="3.500" ry="2.500"/><rect x="92" y="3" width="1" height="10"/><path d="M93 3q5 3 3 7M93 6q5 3 3 7" stroke="#d4d4d4" fill="none"/>
<ellipse cx="109" cy="13" rx="3.500" ry="2.500"/><rect x="112" y="3" width="1" height="10"/><path d="M113 3q5 3 3 6M113 6q5 3 3 6M113 9q4 2 2 5" stroke="#d4d4d4" fill="none"/></g>
</svg>
<span class="t c" style="left:481px;top:219px;color:#ccc;font-weight:bold">3</span>
<span class="t c" style="left:501px;top:221px;color:#222;font-weight:bold">.</span>
<div style="left:372px;top:211px;width:1px;height:19px;background:#333"></div><div style="left:391px;top:211px;width:1px;height:19px;background:#333"></div><div style="left:451px;top:211px;width:1px;height:19px;background:#333"></div><div style="left:471px;top:211px;width:1px;height:19px;background:#333"></div>
<div style="left:1470px;top:211px;width:74px;height:19px;background:#c78543"></div>
<span class="t c" style="left:1506px;top:219px;color:#222;font-size:12.5px">1/8</span>
<svg style="left:1470px;top:211px" width="172" height="19"><path d="M68 17h5v-5z" fill="#222"/>
<circle cx="85" cy="9" r="6.500" fill="#ddd"/><circle cx="82" cy="7" r="1" fill="#444"/><circle cx="85" cy="5" r="1" fill="#444"/><circle cx="88" cy="7" r="1" fill="#444"/>
<path d="M103 5h7l-7 7z" fill="#ddd"/><rect x="118" y="0" width="27" height="19" fill="#c78543"/><path d="M119 5l4 4-4 4z" fill="#222"/>
<path d="M124 3h15v15h-15zM129 3v15M134 3v15M124 8h15M124 13h15" stroke="#3a2208" fill="none"/>
<path d="M160 5v8l-5-4zM166 5v8l-5-4z" fill="#ccc"/></svg>

<!-- ruler -->
<div style="left:18px;top:233px;width:101px;height:33px;background:#454747;border:1px solid #666;box-sizing:border-box"></div>
<div style="left:126px;top:234px;width:1489px;height:32px;background:#3e4244;border-top:1px solid #8e9090;border-bottom:2px solid #9a9a9a;box-sizing:border-box"></div>
<div style="left:126px;top:259px;width:1489px;height:1px;background:#8a8a8a"></div>
<div style="left:126px;top:255px;width:1476px;height:4px;background:repeating-linear-gradient(90deg,#888 0 1px,transparent 1px 41px)"></div>
<div style="left:126px;top:248px;width:1477px;height:17px;background:repeating-linear-gradient(90deg,#aaa 0 1px,transparent 1px 164px)"></div>
<span class="t" style="left:129px;top:252px;color:#bbb;font-size:10px">1</span>
<span class="t" style="left:292px;top:252px;color:#bbb;font-size:10px">2</span>
<span class="t" style="left:456px;top:252px;color:#bbb;font-size:10px">3</span>
<span class="t" style="left:620px;top:252px;color:#bbb;font-size:10px">4</span>
<span class="t" style="left:784px;top:252px;color:#bbb;font-size:10px">5</span>
<span class="t" style="left:948px;top:252px;color:#bbb;font-size:10px">6</span>
<span class="t" style="left:1112px;top:252px;color:#bbb;font-size:10px">7</span>
<span class="t" style="left:1276px;top:252px;color:#bbb;font-size:10px">8</span>
<span class="t" style="left:1440px;top:252px;color:#bbb;font-size:10px">9</span>
<span class="t" style="left:1604px;top:252px;color:#bbb;font-size:10px">10</span>
<span class="t" style="left:138px;top:240px;color:#aaa;font-size:10px">Gm</span>
<span class="t" style="left:303px;top:240px;color:#aaa;font-size:10px">VST</span>
<span class="t" style="left:958px;top:240px;color:#aaa;font-size:10px">VST *</span>
<svg style="left:120px;top:230px" width="1500" height="40">
<path d="M7 5h8l-8 9zM170 5h8l-8 9zM826 5h8l-8 9zM1482 5h12l-12 9z" fill="#b8b8b8"/>
<path d="M284 6h20l-10 8z" fill="#25c85a"/><rect x="293" y="14" width="1" height="22" fill="#25c85a"/>
</svg>

<!-- plus & right scroll -->
<div style="left:1617px;top:251px;width:14px;height:14px;background:#333"></div>
<span class="t c" style="left:1624px;top:257px;color:#ddd;font-size:17px">+</span>
<div style="left:1614px;top:272px;width:19px;height:2px;background:#777"></div>
<div style="left:1614px;top:279px;width:19px;height:2px;background:#777"></div>
<div style="left:1641px;top:232px;width:1px;height:541px;background:#6a6a6a"></div>
<svg style="left:1616px;top:290px" width="16" height="430">
<path d="M4 9l4-7 4 7zM4 365l4 6 4-6z" fill="#1c1c1c"/>
<g fill="none" stroke="#d8d8d8" stroke-width="1.300"><circle cx="7" cy="387" r="4.500"/><path d="M10 391l4 4M5 387h4"/><circle cx="7" cy="414" r="4.500"/><path d="M10 418l4 4M5 414h4M7 412v4"/></g>
<rect x="7" y="397" width="3" height="5" fill="#bbb"/></svg>
<div style="left:1616px;top:589px;width:15px;height:15px;background:#c6c6c6"></div>

<!-- grid -->
<div style="left:126px;top:287px;width:1487px;height:426px;background-color:#3c3d3e;background-image:repeating-linear-gradient(90deg,#7e7e7e 0 1px,transparent 1px 164px),repeating-linear-gradient(90deg,#5e5f5f 0 1px,transparent 1px 41px),repeating-linear-gradient(90deg,#474848 0 1px,transparent 1px 10.25px),repeating-linear-gradient(180deg,#3c3d3e 0 8px,#6c6c6c 8px 9px,#3c3d3e 9px 18px,#313131 18px 27px,#3c3d3e 27px 36px,#313131 36px 45px,#3c3d3e 45px 54px,#313131 54px 63px,#3c3d3e 63px 81px,#313131 81px 90px,#3c3d3e 90px 99px,#313131 99px 108px)"></div>
<div style="left:126px;top:287px;width:164px;height:426px;background:rgba(0,0,0,.2)"></div>
<div style="left:413px;top:287px;width:1px;height:426px;background:#d4d4d4"></div>

<!-- notes -->
<div class="n" style="left:290px;top:549px;width:31px"></div>
<div class="n" style="left:332px;top:522px;width:30px"></div>
<div class="n" style="left:372px;top:486px;width:32px"></div>
<div class="n" style="left:414px;top:522px;width:16px"></div>
<div class="n" style="left:434px;top:531px;width:17px"></div>
<div class="n" style="left:454px;top:585px;width:31px"></div>
<div class="n" style="left:496px;top:549px;width:30px"></div>
<div class="n" style="left:537px;top:522px;width:20px"></div>
<div class="n" style="left:618px;top:585px;width:31px"></div>
<div class="n" style="left:660px;top:549px;width:30px"></div>
<div class="n" style="left:946px;top:549px;width:31px"></div>
<div class="n" style="left:988px;top:522px;width:31px"></div>
<div class="n" style="left:1029px;top:486px;width:31px"></div>
<div class="n" style="left:1069px;top:522px;width:17px"></div>
<div class="n" style="left:1090px;top:531px;width:17px"></div>
<div class="n" style="left:1111px;top:585px;width:31px"></div>
<div class="n" style="left:1152px;top:549px;width:31px"></div>
<div class="n" style="left:1193px;top:522px;width:20px"></div>
<div class="n" style="left:1274px;top:585px;width:31px"></div>
<div class="n" style="left:1316px;top:549px;width:31px"></div>
<div class="n" style="left:1357px;top:504px;width:31px"></div>
<div class="n" style="left:1399px;top:531px;width:16px"></div>
<div class="n" style="left:1419px;top:549px;width:17px"></div>
<div class="n" style="left:1439px;top:594px;width:31px"></div>
<div class="n" style="left:1480px;top:558px;width:31px"></div>
<div class="n" style="left:1521px;top:594px;width:20px"></div>
<div class="n" style="left:1562px;top:486px;width:31px"></div>

<!-- piano keys -->
<svg style="left:19px;top:287px" width="100" height="426">
<defs>
<linearGradient id="bk" x1="0" x2="1" y1="0" y2="0"><stop offset="0" stop-color="#1c1c1c"/><stop offset=".72" stop-color="#2c2c2c"/><stop offset=".9" stop-color="#666"/><stop offset=".91" stop-color="#111"/><stop offset="1" stop-color="#111"/></linearGradient>
<pattern id="oct" patternUnits="userSpaceOnUse" width="100" height="108">
<rect width="100" height="108" fill="#d4d4d4"/>
<path d="M0 8.500h99M0 22.500h99M0 40.500h99M0 58.500h99M0 71.500h99M0 85.500h99M0 103.500h99" stroke="#111"/>
<rect x="0" y="19" width="66" height="7" rx="2" fill="url(#bk)"/><rect x="0" y="37" width="66" height="7" rx="2" fill="url(#bk)"/><rect x="0" y="55" width="66" height="7" rx="2" fill="url(#bk)"/><rect x="0" y="82" width="66" height="7" rx="2" fill="url(#bk)"/><rect x="0" y="100" width="66" height="7" rx="2" fill="url(#bk)"/>
</pattern></defs>
<rect width="99" height="426" fill="url(#oct)"/></svg>
<div class="ck" style="top:289px">C 5</div>
<div class="ck" style="top:397px">C 4</div>
<div class="ck" style="top:505px">C 3</div>
<div class="ck" style="top:613px">C 2</div>

<!-- velocity pane -->
<div style="left:126px;top:720px;width:1489px;height:30px;background-color:#2e3031;background-image:repeating-linear-gradient(90deg,#5a5b5b 0 1px,transparent 1px 41px),repeating-linear-gradient(90deg,#393b3c 0 1px,transparent 1px 10.25px)"></div>
<div class="v" style="left:290px"></div><div class="v" style="left:331px"></div><div class="v" style="left:372px"></div><div class="v" style="left:413px"></div><div class="v" style="left:434px"></div><div class="v" style="left:454px"></div><div class="v" style="left:495px"></div><div class="v" style="left:536px"></div><div class="v" style="left:618px"></div><div class="v" style="left:659px"></div>
<div class="v" style="left:700px;background:#c85050"></div>
<div class="v" style="left:741px"></div><div class="v" style="left:762px"></div><div class="v" style="left:782px"></div><div class="v" style="left:823px"></div><div class="v" style="left:864px"></div><div class="v" style="left:905px"></div><div class="v" style="left:946px"></div><div class="v" style="left:987px"></div><div class="v" style="left:1028px"></div><div class="v" style="left:1069px"></div><div class="v" style="left:1089px"></div><div class="v" style="left:1110px"></div><div class="v" style="left:1151px"></div><div class="v" style="left:1192px"></div><div class="v" style="left:1274px"></div><div class="v" style="left:1315px"></div><div class="v" style="left:1356px"></div><div class="v" style="left:1397px"></div><div class="v" style="left:1417px"></div><div class="v" style="left:1438px"></div><div class="v" style="left:1479px"></div><div class="v" style="left:1520px"></div><div class="v" style="left:1561px"></div>
<div style="left:18px;top:720px;width:101px;height:30px;background:#3c3e3e"></div>
<div style="left:35px;top:721px;width:54px;height:2px;background:#999"></div>
<div style="left:35px;top:727px;width:54px;height:20px;background:#e9bb74;border-radius:3px"></div>
<span class="t c" style="left:61px;top:737px;color:#3a2a10;font-size:12px">Velocity</span>
<div style="left:22px;top:734px;width:9px;height:9px;background:#bbb;border-radius:1px"></div>
<div style="left:24px;top:738px;width:5px;height:1px;background:#222"></div>
<span class="t rt" style="left:118px;top:727px;color:#999;font-size:10.5px">127</span>
<span class="t rt" style="left:118px;top:743px;color:#999;font-size:10.5px">0</span>
<div style="left:20px;top:751px;width:20px;height:20px;background:#333"></div>
<svg style="left:20px;top:751px" width="20" height="20"><path d="M10 4v12M4 10h12" stroke="#eee" stroke-width="2"/></svg>
<div style="left:44px;top:751px;width:24px;height:20px;background:#333"></div>
<svg style="left:44px;top:751px" width="24" height="20"><path d="M4 4h12v12h-12z" stroke="#ddd" fill="none"/><path d="M3 3h3v3h-3zM14 3h3v3h-3zM3 14h3v3h-3zM14 14h3v3h-3zM9 9h2v2h-2zM20 18h3v-3z" fill="#ddd"/></svg>
<div style="left:98px;top:751px;width:20px;height:20px;background:#333"></div>
<svg style="left:103px;top:756px" width="10" height="10"><path d="M1 0h8M1 2h8M1 5h8l-4 4z" stroke="#ddd" fill="#ddd"/></svg>
<svg style="left:130px;top:752px" width="10" height="12"><path d="M8 2v8l-6-4z" fill="#222"/></svg>
<div style="left:144px;top:751px;width:15px;height:15px;background:#c6c6c6"></div>
<div style="left:16px;top:773px;width:1626px;height:1px;background:#8a8a8a"></div>
<svg style="left:1550px;top:750px" width="70" height="20"><path d="M6 5v8l6-4z" fill="#222"/>
<g fill="none" stroke="#d8d8d8" stroke-width="1.300"><circle cx="27" cy="8" r="4.500"/><path d="M30 12l4 4M25 8h4"/><circle cx="56" cy="8" r="4.500"/><path d="M59 12l4 4M54 8h4M56 6v4"/></g><rect x="39" y="8" width="5" height="8" fill="#bbb"/></svg>

<!-- dialog -->
<div style="left:672px;top:369px;width:285px;height:280px;background:#67e4ea;box-shadow:0 0 0 1px #4bb6bd"></div>
<span class="t c" style="left:814px;top:383px;font-size:15px;color:#1c4a52">Note Properties</span>
<div style="left:919px;top:370px;width:31px;height:20px;background:#c75050"></div>
<span class="t c" style="left:935px;top:379px;color:#fff;font-size:12px;font-weight:bold">✕</span>
<div style="left:680px;top:400px;width:269px;height:242px;background:#f0f0f0;box-shadow:0 0 0 1px #4bb6bd"></div>
<span class="t lab" style="top:426px">Time:</span>
<span class="t lab" style="top:456px">Pitch:</span>
<span class="t lab" style="top:487px">Velocity:</span>
<span class="t lab" style="top:518px">Duration:</span>
<span class="t lab" style="top:549px">Channel:</span>
<span class="t lab" style="top:580px;">Fret:</span>
<span class="t lab" style="top:611px">String:</span>
<div class="in" style="top:416px;width:88px;border-color:#5a9fd4"></div>
<div class="in" style="top:448px;width:64px"></div>
<div class="in" style="top:478px;width:40px"></div>
<div class="in" style="top:509px;width:88px"></div>
<div class="in" style="top:540px;width:40px"></div>
<div class="in x" style="top:571px;width:40px"></div>
<div class="in x" style="top:602px;width:40px"></div>
<span class="t" style="left:748px;top:425px;font-size:11.5px;color:#111">00:00:07:27</span>
<span class="t" style="left:748px;top:456px;font-size:12px;color:#111">C 3</span>
<span class="t" style="left:748px;top:487px;font-size:12px;color:#111">100</span>
<span class="t" style="left:748px;top:518px;font-size:12px;color:#111">90</span>
<span class="t" style="left:748px;top:549px;font-size:12px;color:#111">2</span>
<span class="t" style="left:749px;top:580px;font-size:12px;color:#999">0</span>
<span class="t" style="left:749px;top:611px;font-size:12px;color:#999">0</span>
<svg style="left:660px;top:360px" width="310" height="300">
<defs><g id="spn"><rect x="0" y="0" width="8" height="8" fill="#999"/><rect x="0" y="10" width="8" height="7" fill="#999"/><path d="M1.500 4h5M4 1.500v5" stroke="#222" stroke-width="1.400"/><path d="M1.500 13h5" stroke="#eee" stroke-width="1.400"/></g></defs>
<use href="#spn" x="174" y="58"/><use href="#spn" x="150" y="88"/><use href="#spn" x="126" y="119"/><use href="#spn" x="174" y="150"/><use href="#spn" x="126" y="181"/>
<use href="#spn" x="126" y="212" opacity=".55"/><use href="#spn" x="126" y="243" opacity=".55"/>
<path d="M103 48C94 46 86 47 80 49C74 51 72 54 70 58C67 64 64 72 65 78C70 81 78 81 87 82C104 84 118 82 133 83C145 84 156 85 167 86C175 87 181 86 185 83C191 80 194 76 194 70C194 65 191 61 187 58C180 55 170 52 160 52C150 52 142 53 133 52C122 51 112 49 103 48z" fill="none" stroke="#f07a28" stroke-width="2.600"/>
</svg>
<div class="btn" style="top:411px;border-color:#5a9fd4;background:#e6edf2">OK</div>
<div class="btn" style="top:438px">Cancel</div>
<div class="btn" style="top:466px">Help</div>

<!-- strip below MDI + taskbar -->
<div style="left:0;top:1003px;width:1680px;height:7px;background:#464646"></div>
<div style="left:1678px;top:125px;width:2px;height:878px;background:#3a3a3a"></div>
<div style="left:0;top:1010px;width:1680px;height:40px;background:linear-gradient(90deg,#3db7ad 0%,#45b6b4 30%,#4fb3bf 65%,#4fb0c5 87%,#4b9bc6 88%,#4b9ac6 100%)"></div>
<svg style="left:0;top:1010px" width="1680" height="40">
<path d="M1235 0l30 40h-4l-30-40zM1467 0l-60 40h-3l60-40z" fill="#5bb6c6"/>
<path d="M12 9l12-2v11h-12zM25.500 7l12.500-2v13h-12.500zM12 20h12v11l-12-2zM25.500 20h12.500v13l-12.500-2z" fill="#fff"/>
<rect x="66" y="10" width="31" height="22" rx="1" fill="#f5dd90"/><rect x="66" y="7" width="14" height="5" fill="#ecc968"/><path d="M72 8h3v4h-3zM80 9h5v3h-5z" fill="#d55"/><rect x="70" y="27" width="24" height="7" fill="#cfe4f6"/><path d="M73 20h18v9h-4v-4h-10v4h-4z" fill="#6aaee8"/>
<rect x="114" y="1" width="58" height="37" fill="#fff" fill-opacity=".18" stroke="#8fd6d2"/>
<path d="M138 6h19v27l-16 2z" fill="#f0f4f6"/><path d="M129 27l9-21 3 29z" fill="#5aa6cc"/><path d="M139 6h18v2h-18z" fill="#9ab"/>
<rect x="176" y="1" width="57" height="37" fill="#fff" fill-opacity=".18" stroke="#8fd6d2"/>
<ellipse cx="205" cy="20" rx="15" ry="15" fill="#cc1020"/><ellipse cx="205" cy="20" rx="6.500" ry="11" fill="#5ab8bc"/>
<rect x="238" y="1" width="58" height="37" fill="#fff" fill-opacity=".32" stroke="#bfe8e8"/>
<rect x="250" y="4" width="33" height="32" fill="#ee6420"/><path d="M262 17h4v3h-4zM268 17h4v3h-4zM262 22h4v3h-4zM268 22h4v3h-4zM268 13h4v3h-4z" fill="#fff"/>
<rect x="1363" y="13" width="15" height="16" fill="#ddd"/><path d="M1364 20h13v9h-13z" fill="#fff"/><path d="M1366 20v9M1369 20v9M1372 20v9M1375 20v9" stroke="#111"/><rect x="1363" y="13" width="15" height="6" fill="#555"/><circle cx="1368" cy="16" r="1.300" fill="#c33"/><circle cx="1373" cy="16" r="1.300" fill="#c33"/>
<rect x="1387" y="13" width="16" height="16" rx="3" fill="#333"/><circle cx="1395" cy="21" r="5.500" fill="none" stroke="#fff" stroke-width="1.500"/><path d="M1395 21l3-4" stroke="#e55"/>
<rect x="1411" y="13" width="16" height="16" fill="#fff"/><rect x="1411" y="13" width="16" height="6" fill="#e0701c"/><rect x="1411" y="13" width="16" height="2" fill="#222"/><path d="M1412 22h14M1412 25h14M1412 28h14" stroke="#222"/>
<path d="M1434 18l6-1 3-4 3 4 4 2-3 5 1 4-6-1-4 2-1-5z" fill="#f07818"/>
<rect x="1459" y="13" width="7" height="12" fill="#888"/><circle cx="1470" cy="25" r="4" fill="#2cb04c"/>
<rect x="1483" y="13" width="16" height="16" fill="#1c3c22"/><ellipse cx="1491" cy="21" rx="6" ry="3.500" fill="none" stroke="#86b830" stroke-width="1.500"/>
<path d="M1508 14h5v6h-5zM1513 14h9v10h-9zM1511 20v8h8" stroke="#fff" fill="none"/>
<path d="M1532 18h3l4-3v13l-4-3h-3z" fill="#fff"/><path d="M1541 18q2 3 0 6M1544 16q3 5 0 10" stroke="#fff" fill="none"/>
</svg>
<span class="t c" style="left:1573px;top:1030px;color:#fff;font-size:12px">РУС</span>
<span class="t c" style="left:1631px;top:1021px;color:#fff;font-size:12px">9:15</span>
<span class="t c" style="left:1630px;top:1039px;color:#fff;font-size:11px">Ср 15.12.21</span>
</body></html>
